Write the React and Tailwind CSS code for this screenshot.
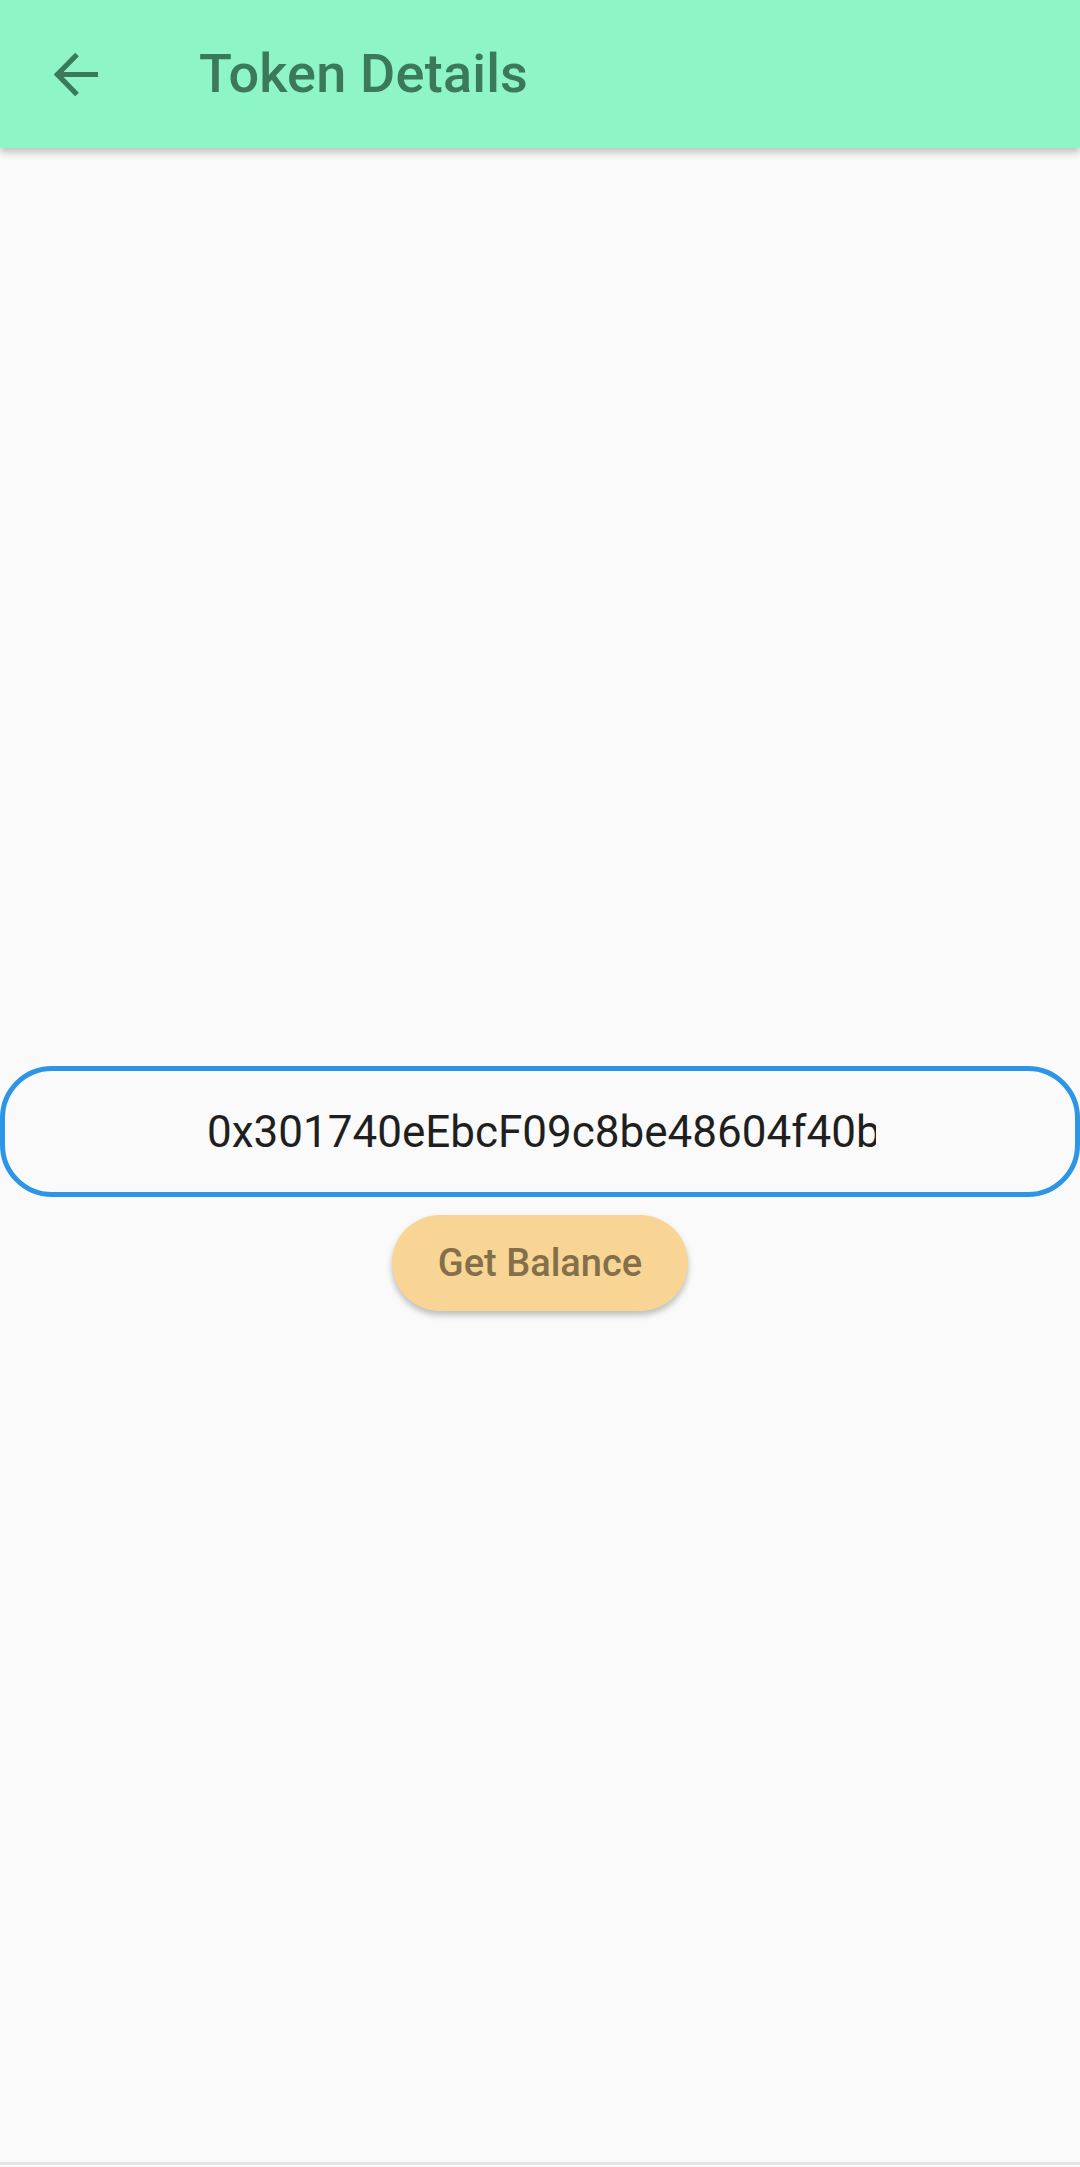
import React from "react";

export default function App() {
  return (
    <div className="w-[1080px] h-[2167px] bg-[#fafafa] flex flex-col overflow-hidden" style={{ fontFamily: "Roboto, 'Noto Sans', sans-serif" }}>
      <header className="h-[148px] bg-[#8df5c6] flex items-center shadow-[0_4px_8px_rgba(0,0,0,0.25)] relative z-10 shrink-0">
        <div className="w-[154px] flex items-center justify-center">
          <svg width="46" height="45" viewBox="0 0 46 45" fill="none">
            <path d="M44 22.5H5 M23 2.5L3.5 22.5L23 42.5" stroke="#3b795a" strokeWidth="5.2" strokeLinecap="butt" strokeLinejoin="miter" />
          </svg>
        </div>
        <h1 className="text-[54px] font-medium text-[#3b795a] ml-[45px] leading-none tracking-[0.2px]">Token Details</h1>
      </header>
      <main className="flex-1 flex flex-col items-center">
        <div className="mt-[918px] w-[1080px] h-[131px] rounded-[52px] border-[5px] border-[#2d95e6] flex items-center">
          <div className="ml-[202px] w-[669px] overflow-hidden whitespace-nowrap text-[44px] text-[#1f1f1f] leading-none">
            0x301740eEbcF09c8be48604f40b
          </div>
        </div>
        <button className="mt-[18px] w-[296px] h-[96px] rounded-full bg-[#f9d595] shadow-[0_4px_6px_rgba(0,0,0,0.25)] text-[38px] font-medium text-[#83704a] flex items-center justify-center">
          Get Balance
        </button>
      </main>
      <div className="h-[3px] bg-[#e3e3e3] shrink-0 mb-[2px]"></div>
    </div>
  );
}
